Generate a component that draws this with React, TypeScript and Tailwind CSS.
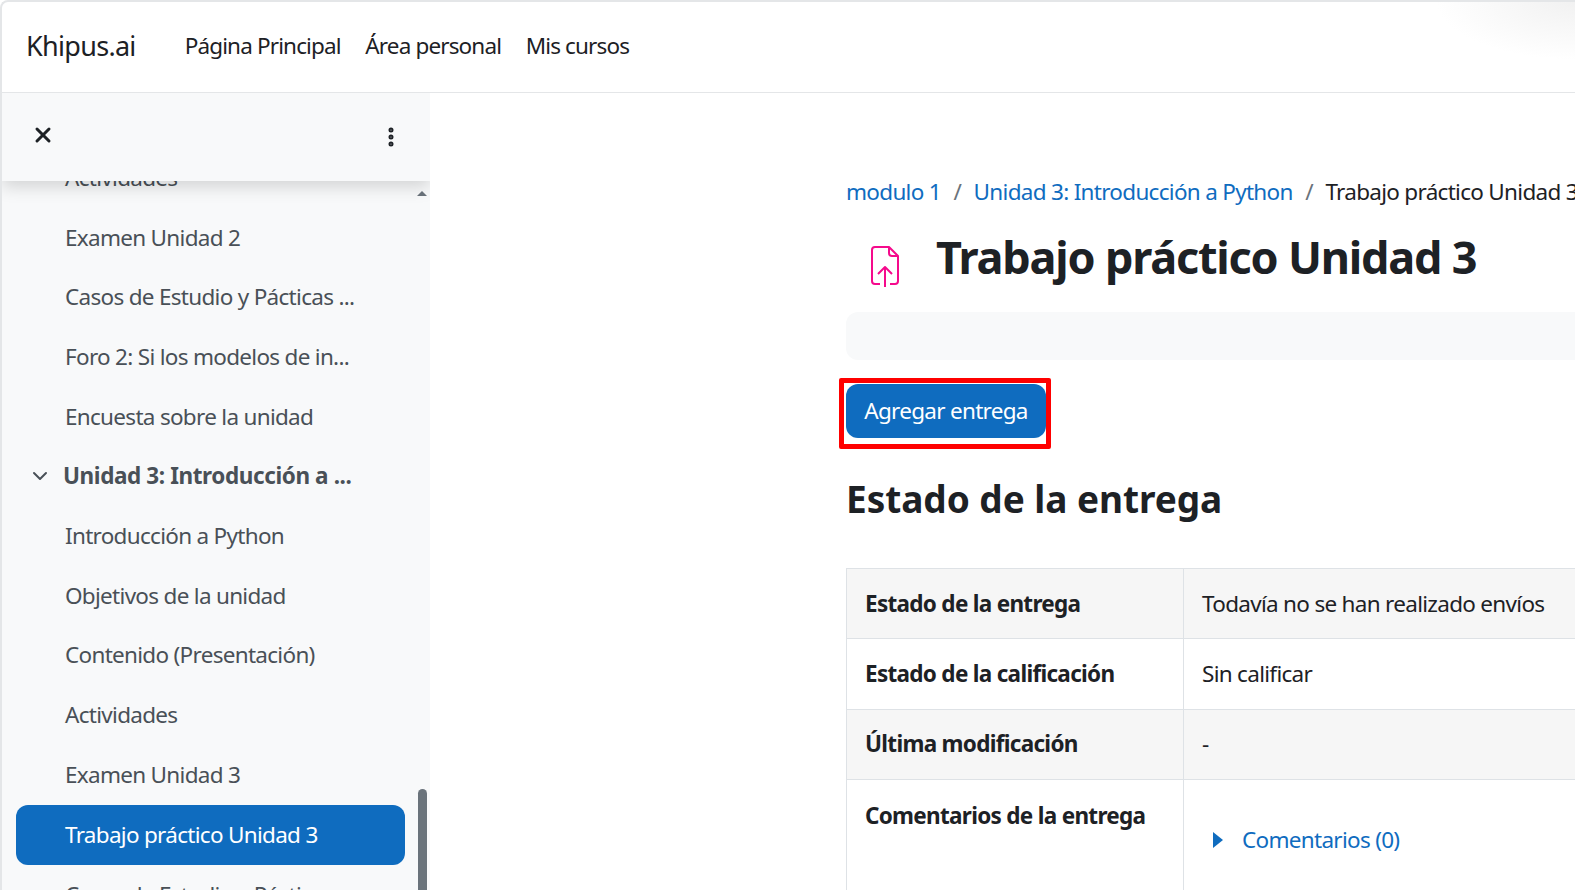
import React from "react";
import { X, EllipsisVertical, ChevronDown } from "lucide-react";

const topItems = ["Examen Unidad 2", "Casos de Estudio y Pácticas ...", "Foro 2: Si los modelos de in...", "Encuesta sobre la unidad"];
const unitItems = ["Introducción a Python", "Objetivos de la unidad", "Contenido (Presentación)", "Actividades", "Examen Unidad 3"];

const SideLink = ({ label }: { label: string }) => (
  <div className="h-[59.7px] flex items-center pl-[63px] text-[22.5px] text-[#495057] whitespace-nowrap">{label}</div>
);

const TableRow = ({ label, value, shaded, last }: { label: string; value: React.ReactNode; shaded?: boolean; last?: boolean }) => (
  <div className={`flex border-b border-[#dee2e6] ${shaded ? "bg-[#f6f6f6]" : "bg-white"} ${last ? "h-[120px]" : "h-[70.3px]"}`}>
    <div className={`w-[337px] shrink-0 border-r border-[#dee2e6] px-[18px] font-bold ${last ? "pt-[19px]" : "flex items-center"}`}>{label}</div>
    <div className={`flex-1 px-[18px] whitespace-nowrap ${last ? "" : "flex items-center"}`}>{value}</div>
  </div>
);

export default function App() {
  return (
    <div className="relative h-[890px] w-[1575px] overflow-hidden bg-white text-[22.5px] text-[#1d2125] font-['Noto_Sans',sans-serif] tracking-[-0.7px]">
      <div className="absolute right-0 top-0 h-[60px] w-[140px] bg-[radial-gradient(ellipse_at_top_right,#f1f1f1,#ffffff_70%)]"></div>
      <header className="relative h-[93px] flex items-center border-t-2 border-l-2 border-b border-[#e4e6e8] rounded-tl-lg pl-[24px] pb-[2px]">
        <span className="text-[27px] mr-[49px]">Khipus.ai</span>
        <nav className="flex gap-[24.5px] tracking-[-0.85px]">
          <span>Página Principal</span>
          <span>Área personal</span>
          <span>Mis cursos</span>
        </nav>
      </header>
      <div className="flex h-[797px]">
        <aside className="relative w-[430px] shrink-0 border-l-2 border-[#e4e6e8] bg-[#f8f9fa] overflow-hidden">
          <div className="relative z-10 h-[88px] flex items-center justify-between pl-[29px] pr-[27px] bg-[#f8f9fa] shadow-[0_6px_16px_rgba(0,0,0,0.15)]">
            <X size={24} strokeWidth={3} className="text-[#1d2125] mb-[4px]" />
            <EllipsisVertical size={24} strokeWidth={3} className="text-[#1d2125]" />
          </div>
          <div className="-mt-[33px]">
            <SideLink label="Actividades" />
            {topItems.map((t) => <SideLink key={t} label={t} />)}
            <div className="h-[59.7px] flex items-center pl-[26px] gap-[11px] text-[#495057] font-bold tracking-[-0.4px] whitespace-nowrap">
              <ChevronDown size={24} strokeWidth={2} />
              <span>Unidad 3: Introducción a ...</span>
            </div>
            {unitItems.map((t) => <SideLink key={t} label={t} />)}
            <div className="mx-[14px] w-[389px] h-[60px] flex items-center pl-[49px] rounded-[12px] bg-[#0f6cbf] text-white whitespace-nowrap">Trabajo práctico Unidad 3</div>
            <SideLink label="Casos de Estudio y Pácticas ..." />
          </div>
          <div className="absolute right-[3px] top-[98px] w-0 h-0 border-x-[5px] border-x-transparent border-b-[5px] border-b-[#6a737b]"></div>
          <div className="absolute right-[3px] top-[696px] h-[110px] w-[9px] rounded-full bg-[#6a737b]"></div>
        </aside>
        <main className="pl-[416px] w-[1400px] shrink-0">
          <div className="mt-[84px] h-[30px] flex items-center gap-[12.5px] whitespace-nowrap">
            <span className="text-[#0f6cbf]">modulo 1</span>
            <span className="text-[#6a737b]">/</span>
            <span className="text-[#0f6cbf]">Unidad 3: Introducción a Python</span>
            <span className="text-[#6a737b]">/</span>
            <span>Trabajo práctico Unidad 3</span>
          </div>
          <div className="mt-[19px] h-[62px] flex items-center">
            <svg viewBox="0 0 32 44" className="ml-[23px] w-[32px] h-[44px] mt-[18px] shrink-0" fill="none" stroke="#f50a8c" strokeWidth="2" strokeLinejoin="round">
              <path d="M11 40H6a3 3 0 0 1-3-3V6a3 3 0 0 1 3-3h14l9 9v25a3 3 0 0 1-3 3h-5" />
              <path d="M20 3v6a3 3 0 0 0 3 3h6" />
              <path d="M16 43V23M9 30l7-7 7 7" />
            </svg>
            <h1 className="ml-[35px] text-[45px] font-bold tracking-[-1.2px] whitespace-nowrap">Trabajo práctico Unidad 3</h1>
          </div>
          <div className="mt-[24px] h-[48px] rounded-[12px] bg-[#f8f9fa]"></div>
          <div className="relative mt-[24px] h-[54px] w-[200px] rounded-[12px] bg-[#0f6cbf] text-white flex items-center justify-center whitespace-nowrap">
            Agregar entrega
            <div className="absolute -left-[7px] -top-[6px] h-[71px] w-[212px] border-[5px] border-[#ff0000] rounded-[2px]"></div>
          </div>
          <h2 className="mt-[35px] h-[52px] flex items-center text-[37px] font-bold tracking-[-0.05px] whitespace-nowrap">Estado de la entrega</h2>
          <div className="mt-[43px] border-t border-l border-[#dee2e6]">
            <TableRow label="Estado de la entrega" value="Todavía no se han realizado envíos" shaded />
            <TableRow label="Estado de la calificación" value="Sin calificar" />
            <TableRow label="Última modificación" value="-" shaded />
            <TableRow
              last
              label="Comentarios de la entrega"
              value={
                <div className="flex items-center mt-[43px] text-[#0f6cbf]">
                  <span className="ml-[11px] mr-[19px] w-0 h-0 border-y-[8px] border-y-transparent border-l-[10px] border-l-[#0f6cbf]"></span>
                  Comentarios (0)
                </div>
              }
            />
          </div>
        </main>
      </div>
    </div>
  );
}
